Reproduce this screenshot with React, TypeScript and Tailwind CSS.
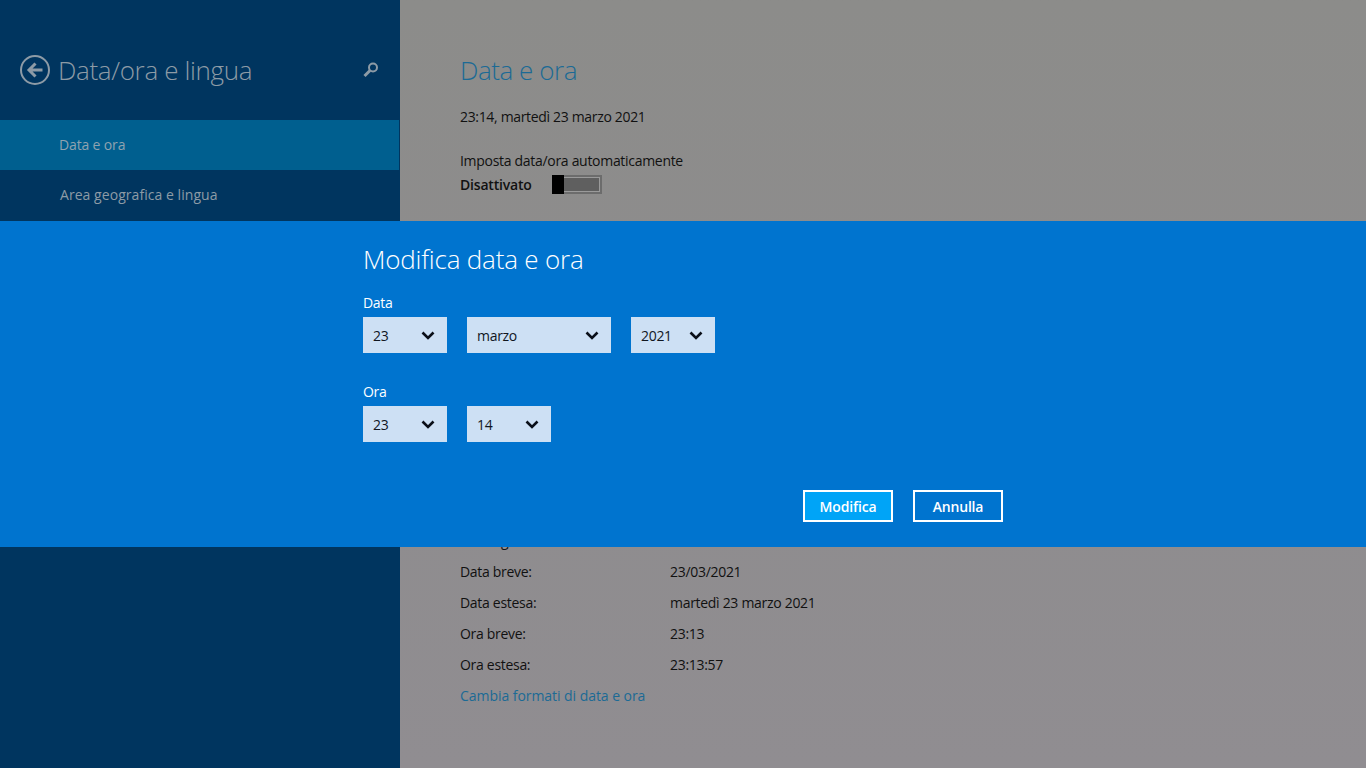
import React from 'react';

const font = { fontFamily: '"Open Sans", "Noto Sans", sans-serif' };

const Chevron = () => (
  <svg width="14" height="10" viewBox="0 0 14 10" className="shrink-0">
    <path d="M1.5 2.5 7 8l5.5-5.5" fill="none" stroke="#0a0f18" strokeWidth="2.6" />
  </svg>
);

// Dropdown of the date/time dialog
const Select = ({ value, width }: { value: string; width: string }) => (
  <div className={`flex h-9 items-center justify-between bg-[#cde0f4] pl-[10px] pr-3 text-[14px] tracking-[-0.3px] text-[#10161f] ${width}`}>
    <span>{value}</span>
    <Chevron />
  </div>
);

const FormatRow = ({ label, value }: { label: string; value: string }) => (
  <div className="flex h-[31px] items-center text-[14px] tracking-[-0.3px] text-[#111]">
    <span className="w-[210px]">{label}</span>
    <span>{value}</span>
  </div>
);

export default function App() {
  return (
    <div className="relative flex h-[768px] w-[1366px] overflow-hidden" style={font}>
      {/* Left pane */}
      <aside className="h-full w-[400px] shrink-0 bg-[#00355f]">
        <div className="flex h-[120px] items-start pl-5 pr-[20px] pt-[53px]">
          <svg width="30" height="34" viewBox="0 0 30 34" className="shrink-0">
            <circle cx="15" cy="17" r="14" fill="none" stroke="#8d9ba6" strokeWidth="2" />
            <path d="M22.5 17H10M15.5 10.5 9 17l6.5 6.5" fill="none" stroke="#8d9ba6" strokeWidth="3" />
          </svg>
          <span className="ml-2 text-[26px] font-light leading-[34px] tracking-[-0.35px] text-[#8d9ba6]">Data/ora e lingua</span>
          <svg width="18" height="18" viewBox="0 0 18 18" className="ml-auto mt-2 shrink-0">
            <circle cx="11" cy="6.5" r="4" fill="none" stroke="#8d9ba6" strokeWidth="2" />
            <path d="M8 9.5 2.5 15" fill="none" stroke="#8d9ba6" strokeWidth="3" />
          </svg>
        </div>
        <div className="mr-px flex h-[50px] items-center bg-[#005f8f] pb-[2px] pl-[59px] text-[14px] tracking-[-0.15px] text-[#8fa3b0]">
          Data e ora
        </div>
        <div className="flex h-[50px] items-center pb-[2px] pl-[60px] text-[14px] tracking-[0.05px] text-[#8d9ba6]">
          Area geografica e lingua
        </div>
      </aside>

      {/* Right pane */}
      <main className="flex-1 bg-gradient-to-b from-[#8c8c8a] to-[#908d91] pl-[60px] pt-[52px]">
        <h1 className="text-[26px] font-light leading-[36px] tracking-[-0.45px] text-[#1b6a95]">Data e ora</h1>
        <p className="mt-[19px] text-[14px] leading-[20px] tracking-[-0.33px] text-[#111]">23:14, martedì 23 marzo 2021</p>
        <p className="mt-6 text-[14px] leading-[20px] tracking-[-0.3px] text-[#111]">Imposta data/ora automaticamente</p>
        <div className="mt-[1px] flex h-[24px] items-center">
          <span className="w-[92px] text-[14px] font-semibold tracking-[-0.2px] text-[#111]">Disattivato</span>
          <div className="flex h-[19px] w-[50px]">
            <div className="w-3 bg-black" />
            <div className="flex-1 border-y-2 border-r-2 border-[#6c6c6c]">
              <div className="h-full border-y border-r border-[#9a9a9a] bg-[#5f5f5f]" />
            </div>
          </div>
        </div>
        <div className="mt-[329px]">
          <FormatRow label="Primo giorno:" value="lunedì" />
          <FormatRow label="Data breve:" value="23/03/2021" />
          <FormatRow label="Data estesa:" value="martedì 23 marzo 2021" />
          <FormatRow label="Ora breve:" value="23:13" />
          <FormatRow label="Ora estesa:" value="23:13:57" />
          <a className="flex h-[31px] items-center text-[14px] tracking-[-0.05px] text-[#1b6a95]">Cambia formati di data e ora</a>
        </div>
      </main>

      {/* Dialog band */}
      <div className="absolute left-0 right-0 top-[221px] h-[326px] bg-[#0074cf] pl-[363px] pt-[21px] text-white">
        <h2 className="text-[26px] font-light leading-[34px] tracking-[-0.2px]">Modifica data e ora</h2>
        <p className="mt-[17px] text-[14px] leading-[20px] tracking-[-0.3px]">Data</p>
        <div className="mt-1 flex gap-5">
          <Select value="23" width="w-[84px]" />
          <Select value="marzo" width="w-[144px]" />
          <Select value="2021" width="w-[84px]" />
        </div>
        <p className="mt-[29px] text-[14px] leading-[20px] tracking-[-0.3px]">Ora</p>
        <div className="mt-1 flex gap-5">
          <Select value="23" width="w-[84px]" />
          <Select value="14" width="w-[84px]" />
        </div>
        <div className="mt-12 flex w-[640px] justify-end gap-5">
          <button className="h-8 w-[90px] border-2 border-white bg-[#00a4f7] text-[14px] font-semibold tracking-[-0.15px]">Modifica</button>
          <button className="h-8 w-[90px] border-2 border-white bg-[#0074cf] text-[14px] font-semibold tracking-[-0.2px]">Annulla</button>
        </div>
      </div>
    </div>
  );
}
